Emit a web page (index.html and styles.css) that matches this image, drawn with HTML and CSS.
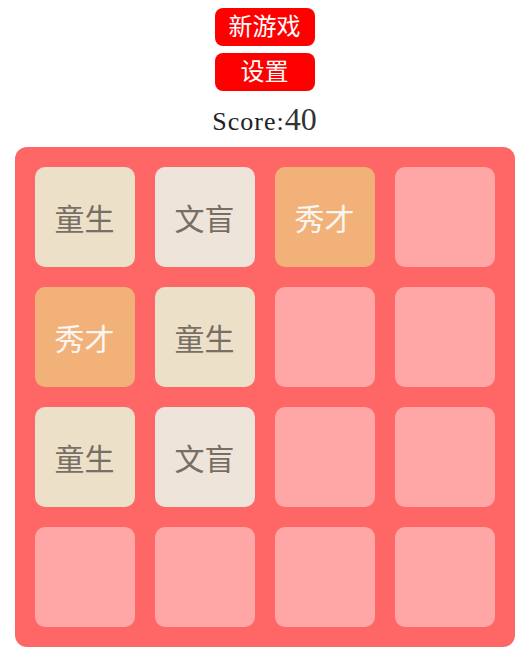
FILE: index.html
```html
<!DOCTYPE html>
<html>
<head>
<meta charset="utf-8">
<link rel="stylesheet" href="styles.css">
</head>
<body>
<div class="header">
  <div class="btn">新游戏</div>
  <div class="btn">设置</div>
  <div class="score"><span class="label">Score:</span><span class="value">40</span></div>
</div>
<div class="board">
  <div class="cell t2">童生</div>
  <div class="cell t1">文盲</div>
  <div class="cell t3">秀才</div>
  <div class="cell"></div>
  <div class="cell t3">秀才</div>
  <div class="cell t2">童生</div>
  <div class="cell"></div>
  <div class="cell"></div>
  <div class="cell t2">童生</div>
  <div class="cell t1">文盲</div>
  <div class="cell"></div>
  <div class="cell"></div>
  <div class="cell"></div>
  <div class="cell"></div>
  <div class="cell"></div>
  <div class="cell"></div>
</div>
</body>
</html>
```

FILE: styles.css
```css
body {
  margin: 8px;
  font-family: "Liberation Serif", "Noto Sans CJK SC", serif;
  background: #fff;
}
.header {
  display: flex;
  flex-direction: column;
  align-items: center;
  gap: 7px;
}
.btn {
  width: 100px;
  height: 38px;
  line-height: 38px;
  background: #ff0000;
  color: #fff;
  border-radius: 8px;
  text-align: center;
  font-size: 24px;
}
.score {
  height: 49px;
  display: flex;
  align-items: baseline;
  justify-content: center;
  padding-top: 3px;
  box-sizing: border-box;
}
.label {
  font-size: 26px;
  letter-spacing: 1px;
  color: #222;
}
.value {
  font-size: 32px;
  color: #333;
}
.board {
  width: 460px;
  margin: 0 auto;
  padding: 20px;
  background: #ff6666;
  border-radius: 12px;
  display: grid;
  grid-template-columns: repeat(4, 100px);
  grid-auto-rows: 100px;
  gap: 20px;
}
.cell {
  background: #ffa6a6;
  border-radius: 10px;
  display: flex;
  align-items: center;
  justify-content: center;
  font-size: 30px;
  color: #776e65;
}
.t1 { background: #eee4da; }
.t2 { background: #ede0c8; }
.t3 { background: #f2b179; color: #f9f6f2; }
```
